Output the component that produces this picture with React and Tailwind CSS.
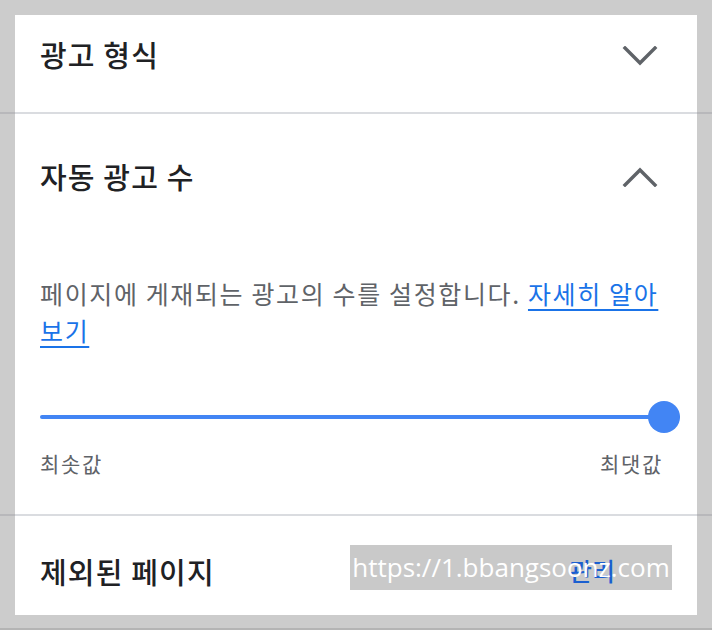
import React from "react";

const FONT = { fontFamily: '"Noto Sans CJK KR", "Noto Sans", Roboto, sans-serif' };

function Chevron({ up }) {
  return (
    <svg width="36" height="20" viewBox="0 0 36 20" fill="none">
      <path
        d={up ? "M3 18 L18 3 L33 18" : "M3 2 L18 17 L33 2"}
        stroke="#5f6368"
        strokeWidth="3.4"
        strokeLinecap="square"
      />
    </svg>
  );
}

function Divider() {
  return (
    <div className="h-[2px] bg-[#b8b8bb]">
      <div className="mx-[15px] h-[2px] bg-[#dadce0]" />
    </div>
  );
}

export default function App() {
  return (
    <div className="h-[630px] bg-[#cccccc] pt-[15px] relative overflow-hidden" style={FONT}>
      {/* ── 광고 형식 ─────────────────────────────── */}
      <div className="px-[15px]">
        <div className="bg-white h-[97px] pt-[18px] pl-[25px] pr-[39px]">
          <div className="h-[42px] flex items-center justify-between">
            <h2 className="text-[29px] leading-[42px] font-medium text-[#202124] tracking-[0.04em]">광고 형식</h2>
            <div className="mt-[4px]">
              <Chevron />
            </div>
          </div>
        </div>
      </div>
      <Divider />

      {/* ── 자동 광고 수 ─────────────────────────── */}
      <div className="px-[15px]">
        <div className="bg-white h-[400px] pl-[25px] pr-[17px] pt-[41px]">
          <div className="h-[42px] flex items-center justify-between pr-[22px]">
            <h2 className="text-[29px] leading-[42px] font-medium text-[#202124] tracking-[0.04em]">자동 광고 수</h2>
            <div className="mt-[2px]">
              <Chevron up />
            </div>
          </div>
          <p className="mt-[78px] text-[25px] leading-[37px] text-[#5f6368] tracking-[0.065em] pr-[10px]">
            페이지에 게재되는 광고의 수를 설정합니다.{" "}
            <a className="text-[#1a73e8] underline underline-offset-[5px] decoration-2">자세히 알아보기</a>
          </p>
          <div className="mt-[52px] relative h-[32px] flex items-center">
            <div className="h-[4px] w-full bg-[#4285f4] rounded" />
            <div className="absolute right-0 top-0 w-[32px] h-[32px] rounded-full bg-[#4285f4]" />
          </div>
          <div className="mt-[15px] flex justify-between pr-[17px] text-[21px] leading-[30px] text-[#5f6368] tracking-[0.08em]">
            <span>최솟값</span>
            <span>최댓값</span>
          </div>
        </div>
      </div>
      <Divider />

      {/* ── 제외된 페이지 ─────────────────────────── */}
      <div className="px-[15px]">
        <div className="bg-white h-[99px] pt-[34px] pl-[25px] pr-[82px]">
          <div className="h-[42px] flex items-center justify-between">
            <h2 className="text-[29px] leading-[42px] font-medium text-[#202124] tracking-[0.04em]">제외된 페이지</h2>
            <span className="relative z-20 text-[25px] font-medium text-[#1a5fd0]">관리</span>
          </div>
        </div>
      </div>

      <div className="absolute left-0 right-0 top-[628px] h-[2px] bg-[#b4b4b4]" />

      {/* watermark: box below the 관리 link, text above it */}
      <div className="absolute z-10 left-[350px] top-[545px] w-[322px] h-[45px] bg-[#c9c9c9]" />
      <div className="absolute z-30 left-[350px] top-[545px] w-[322px] h-[45px] flex items-center justify-center">
        <span className="text-white text-[26px]" style={{ fontFamily: '"Open Sans", "Noto Sans", sans-serif' }}>
          https://1.bbangsoonz.com
        </span>
      </div>
    </div>
  );
}
